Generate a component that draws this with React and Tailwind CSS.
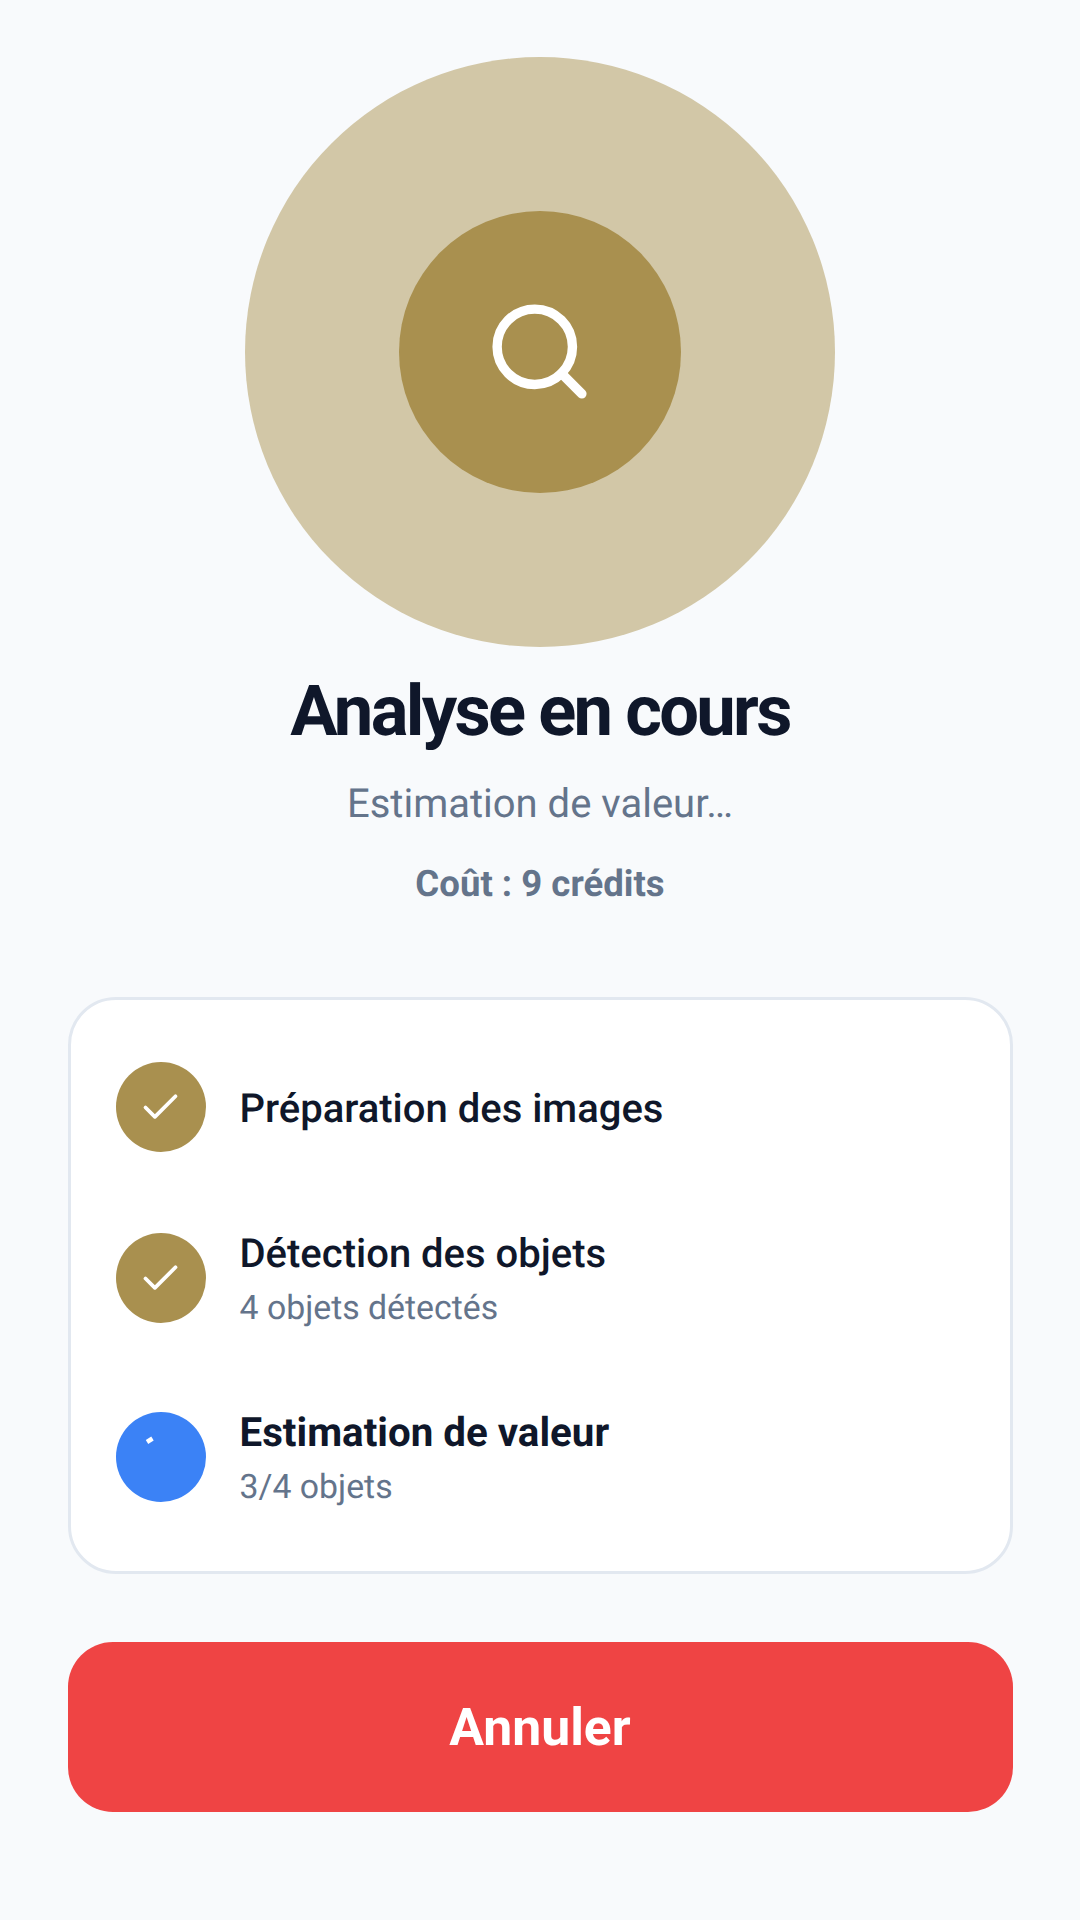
import React from "react";
import { Search, Check } from "lucide-react";

function Step({ title, sub, bold, done, className = "" }) {
  return (
    <div className={"flex items-center gap-[34px] " + className}>
      <div className={"w-[90px] h-[90px] rounded-full flex items-center justify-center shrink-0 " + (done ? "bg-[#a9904f]" : "bg-[#3b82f6]")}>
        {done ? (
          <Check size={45} color="#ffffff" strokeWidth={2} />
        ) : (
          <svg width="90" height="90" viewBox="0 0 90 90">
            <line x1="31" y1="30" x2="36.5" y2="26.5" stroke="#ffffff" strokeWidth="4.5" />
          </svg>
        )}
      </div>
      <div className="flex flex-col pt-[4px]">
        <div className={"leading-[56px] text-[#0f172a] " + (bold ? "font-bold text-[40.3px]" : "font-medium text-[40px]")}>{title}</div>
        {sub && <div className="text-[33.8px] leading-[50px] text-[#64748b] mt-[2px]">{sub}</div>}
      </div>
    </div>
  );
}

export default function App() {
  return (
    <div className="w-[1080px] h-[1920px] bg-[#f8fafc] flex flex-col items-center overflow-hidden [text-rendering:geometricPrecision]" style={{ fontFamily: "Roboto, sans-serif" }}>
      <div className="mt-[57px] w-[590px] h-[590px] rounded-full bg-[#d2c7a7] flex items-center justify-center">
        <div className="w-[282px] h-[282px] rounded-full bg-[#a9904f] flex items-center justify-center">
          <Search size={113} color="#ffffff" strokeWidth={2} className="mr-[2px] mb-[1px]" />
        </div>
      </div>
      <h1 className="mt-[20px] text-[70.5px] leading-[90px] font-bold text-[#0f172a] tracking-[-2.7px]">Analyse en cours</h1>
      <p className="mt-[19px] text-[40px] leading-[56px] text-[#64748b]">Estimation de valeur…</p>
      <p className="mt-[28px] text-[36.6px] leading-[48px] font-bold text-[#64748b]">Coût : 9 crédits</p>
      <div className="mt-[89px] w-[945px] bg-white border-[3px] border-[#e2e8f0] rounded-[48px] px-[45px] pt-[62px] pb-[58px] flex flex-col gap-[67px]">
        <Step title="Préparation des images" done className="mb-[3px]" />
        <Step title="Détection des objets" sub="4 objets détectés" done />
        <Step title="Estimation de valeur" sub="3/4 objets" bold />
      </div>
      <button className="mt-[68px] w-[945px] h-[170px] rounded-[45px] bg-[#ef4444] text-white text-[51.7px] font-bold pt-[2px]">Annuler</button>
    </div>
  );
}
